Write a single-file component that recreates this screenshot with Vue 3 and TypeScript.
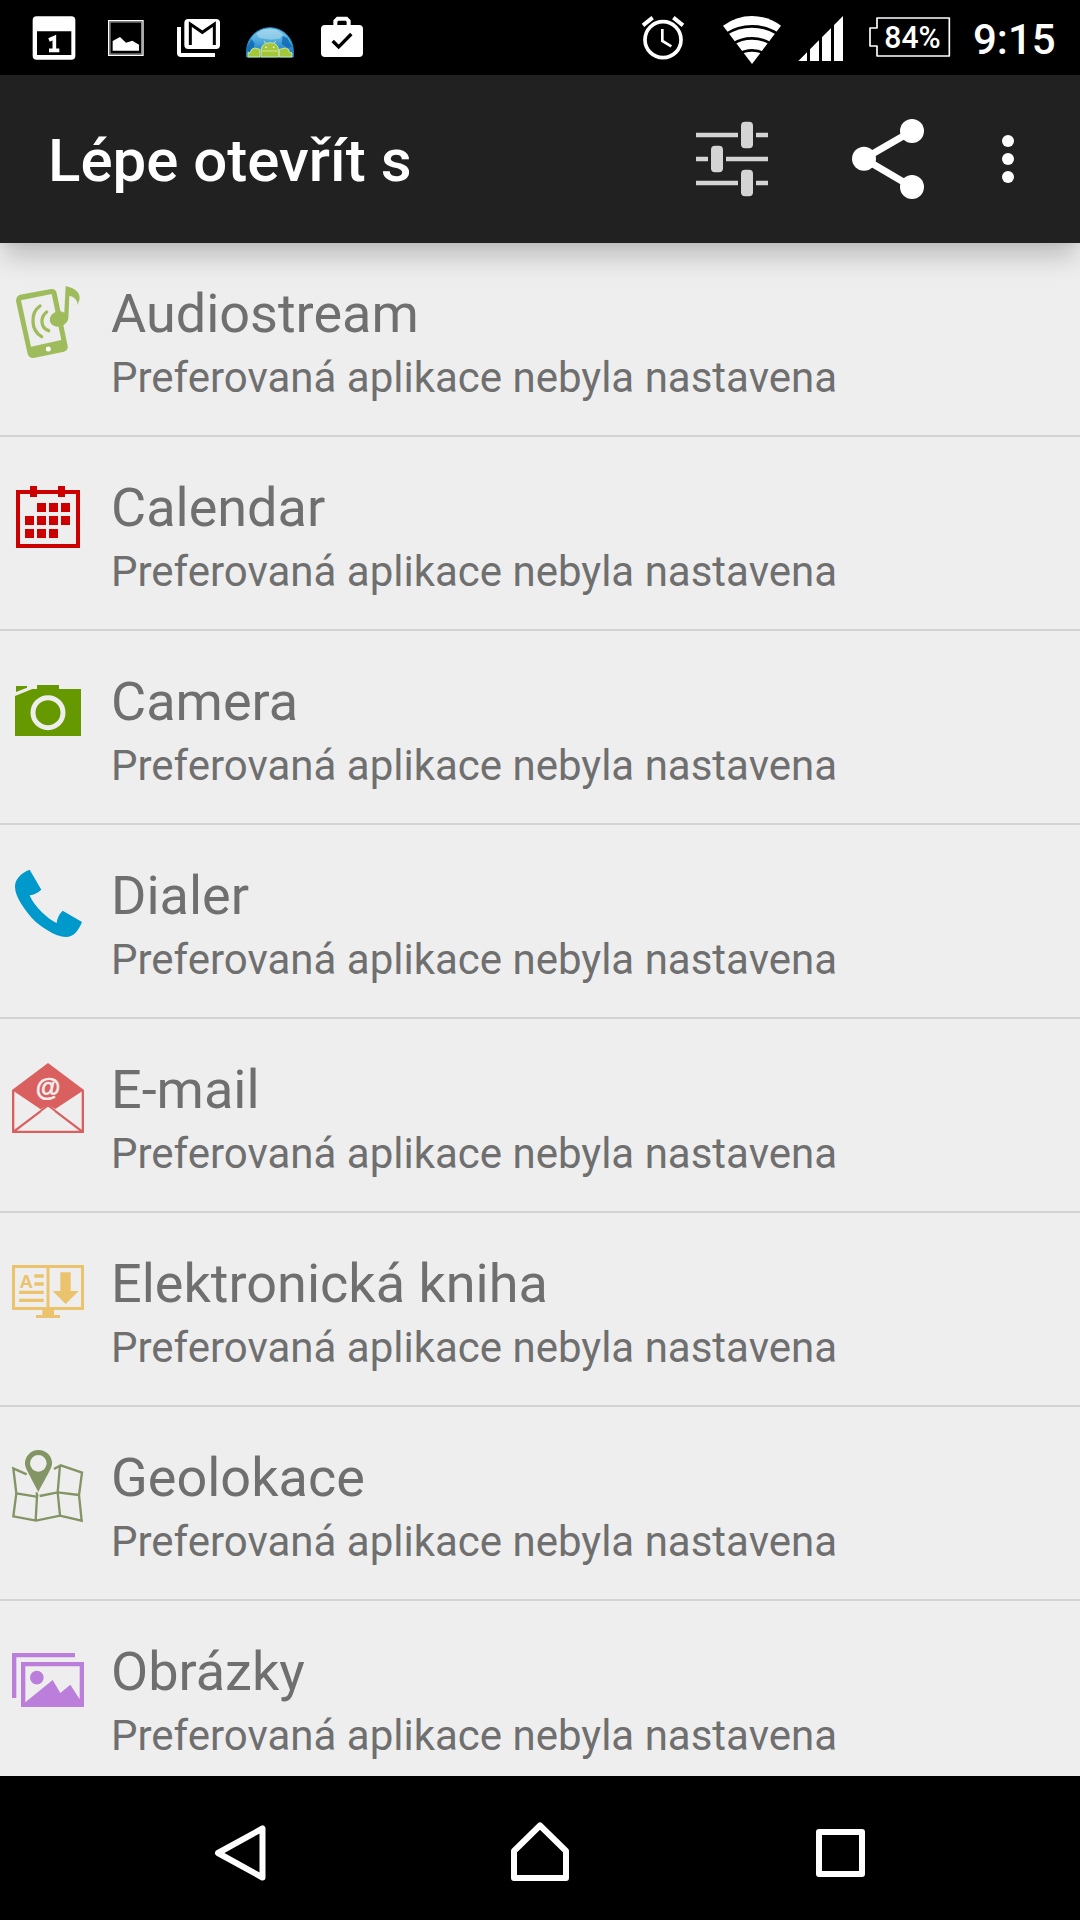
<script setup lang="ts">
interface Entry {
  id: string
  title: string
  view: string
}

const summary = 'Preferovaná aplikace nebyla nastavena'

const entries: Entry[] = [
  { id: 'audio', title: 'Audiostream', view: '0 27 288 288' },
  { id: 'calendar', title: 'Calendar', view: '0 9 288 288' },
  { id: 'camera', title: 'Camera', view: '0 21 288 288' },
  { id: 'dialer', title: 'Dialer', view: '0 3 288 288' },
  { id: 'email', title: 'E-mail', view: '0 15 288 288' },
  { id: 'ebook', title: 'Elektronická kniha', view: '0 -3 288 288' },
  { id: 'geo', title: 'Geolokace', view: '0 39 288 288' },
  { id: 'images', title: 'Obrázky', view: '0 621 288 288' },
]

const calendarCells: [number, number][] = [
  [111, 99], [147, 99], [183, 99],
  [75, 138], [111, 138], [147, 138], [183, 138],
  [75, 177], [111, 177], [147, 177],
]
</script>

<template>
  <div class="screen">
    <header class="status">
      <div class="notifications">
        <svg class="note" viewBox="90 0 144 225">
          <path fill="#fff" fill-rule="evenodd" d="M110 49H214Q226 49 226 61V167Q226 179 214 179H110Q98 179 98 167V61Q98 49 110 49ZM111 94V165H214V94Z" />
          <path fill="none" stroke="#fff" stroke-width="11" d="M147 120L163 113V152M147 151H178" />
        </svg>
        <svg class="note" viewBox="306 0 144 225">
          <rect x="326" y="62" width="103" height="104" fill="none" stroke="#fff" stroke-width="4" />
          <rect x="330" y="66" width="95" height="96" fill="none" stroke="#aaa" stroke-width="3" />
          <path fill="#fff" d="M338 152V123L360 111L378 128L397 122L417 134V152Z" />
        </svg>
        <svg class="note" viewBox="522 0 144 225">
          <path fill="none" stroke="#fff" stroke-width="12" d="M537 81V159Q537 165 543 165H645" />
          <rect x="553" y="57" width="107" height="90" rx="12" fill="#fff" />
          <path fill="none" stroke="#000" stroke-width="9" d="M571 135V72L607 97L643 72V135" />
        </svg>
        <svg class="note" viewBox="738 0 144 225">
          <defs>
            <linearGradient id="sky" x1="0" y1="0" x2="0" y2="1">
              <stop offset="0" stop-color="#8ccbe8" />
              <stop offset="0.45" stop-color="#4ba9da" />
              <stop offset="1" stop-color="#0b6cb8" />
            </linearGradient>
          </defs>
          <path fill="url(#sky)" stroke="#1b8fc8" stroke-width="3" d="M740 171V153A70 70 0 0 1 880 153V171Z" />
          <path fill="#0a61b0" opacity=".75" d="M742 140L754 117L764 130L759 153H742ZM848 108L862 114L876 140L864 145L845 132Z" />
          <path fill="#b5def2" opacity=".55" d="M768 100L790 88L826 88L850 104L838 116L812 119L778 114Z" />
          <path fill="#a4c639" stroke="#d9edb0" stroke-width="2.5" d="M744 171V158H751Q752 145 764 144L780 148V171ZM876 171V158H869Q868 145 856 144L838 148V171Z" />
          <path fill="#a4c639" stroke="#d9edb0" stroke-width="2.5" d="M797 130L792 123M822 130L827 123M783 151Q785 128 810 128Q834 128 836 151V171H783Z" />
          <path stroke="#e8f4c8" stroke-width="2" d="M784 153H835" />
          <circle cx="798" cy="142" r="2.5" fill="#fff" />
          <circle cx="821" cy="142" r="2.5" fill="#fff" />
        </svg>
        <svg class="note" viewBox="954 0 144 225">
          <rect x="963" y="75" width="126" height="96" rx="12" fill="#fff" />
          <path fill="none" stroke="#fff" stroke-width="12" d="M1006 78V63L1013 56H1039L1046 63V78" />
          <path fill="none" stroke="#000" stroke-width="10" d="M998 123L1016 141L1054 102" />
        </svg>
      </div>
      <div class="indicators">
        <svg class="alarm" viewBox="60 0 138 225">
          <circle cx="129" cy="119" r="54" fill="none" stroke="#fff" stroke-width="11" />
          <path fill="none" stroke="#fff" stroke-width="12" d="M69 76L98 53M160 53L189 76" />
          <path fill="none" stroke="#fff" stroke-width="8" d="M127 87V123L154 139" />
        </svg>
        <svg class="wifi" viewBox="306 0 180 225">
          <path fill="#fff" d="M309 77Q349 48 396 48T483 77L396 192Z" />
          <path fill="none" stroke="#000" stroke-width="8" d="M318 102Q353 79 396 79T474 102M338 132Q364 115 396 115T454 132M358 161Q375 151 396 151T434 161" />
        </svg>
        <svg class="signal" viewBox="534 0 138 225">
          <path fill="#fff" d="M535 183L669 48V183Z" />
          <path stroke="#000" stroke-width="9" d="M565.500 40V190M601.500 40V190M637.500 40V190" />
        </svg>
        <svg class="battery" viewBox="747 0 246 225">
          <path fill="none" stroke="#fff" stroke-width="5" stroke-linejoin="round" d="M771 54H988V168H771V138H750V84H771Z" />
          <text class="percent" x="793" y="144" textLength="169" lengthAdjust="spacingAndGlyphs">84%</text>
        </svg>
        <span class="clock">9:15</span>
      </div>
    </header>

    <div class="appbar">
      <h1>Lépe otevřít s</h1>
      <svg class="tune" viewBox="108 -15 216 504">
        <g fill="#d4d4d4">
          <path d="M108 158H234V172H108ZM288 158H324V172H288ZM108 230H144V244H108ZM198 230H324V244H198ZM108 302H234V316H108ZM288 302H324V316H288Z" />
          <rect x="243" y="125" width="36" height="80" rx="12" />
          <rect x="153" y="197" width="36" height="80" rx="12" />
          <rect x="243" y="269" width="36" height="80" rx="12" />
        </g>
      </svg>
      <svg class="share" viewBox="567 -15 234 504">
        <path fill="none" stroke="#fff" stroke-width="21" d="M756 153L612 236L756 321" />
        <g fill="#fff">
          <circle cx="756" cy="153" r="36" />
          <circle cx="612" cy="236" r="36" />
          <circle cx="756" cy="321" r="36" />
        </g>
      </svg>
      <svg class="more" viewBox="1020 -15 48 504">
        <g fill="#fff">
          <circle cx="1044" cy="183" r="18" />
          <circle cx="1044" cy="237" r="18" />
          <circle cx="1044" cy="291" r="18" />
        </g>
      </svg>
    </div>

    <ul class="list">
      <li v-for="entry in entries" :key="entry.id" class="row">
        <svg class="icon" :viewBox="entry.view">
          <g v-if="entry.id === 'audio'" fill="#9fbc5d">
            <path fill-rule="evenodd" d="M60 74L153 57Q167 56 170 69L203 228Q205 241 192 245L101 264Q87 265 83 252L48 94Q48 78 60 74ZM63 91L93 230L184 210L155 72Z" />
            <ellipse cx="176" cy="147" rx="27" ry="23" transform="rotate(-14 176 147)" />
            <path d="M192 145L197 48Q240 58 239 86L233 105Q232 82 208 77L205 145Q203 158 190 163Z" />
            <path fill="none" stroke="#9fbc5d" stroke-width="10" stroke-linecap="round" d="M120 108C91 128 91 180 125 200M140 126C119 142 122 174 146 182" />
            <circle cx="145" cy="237" r="7.500" fill="#fff" />
          </g>
          <g v-else-if="entry.id === 'calendar'" fill="#c00">
            <rect x="54" y="66" width="180" height="162" fill="none" stroke="#c00" stroke-width="12" />
            <rect x="90" y="48" width="21" height="33" />
            <rect x="174" y="48" width="21" height="33" />
            <rect v-for="cell in calendarCells" :key="cell.join()" :x="cell[0]" :y="cell[1]" width="27" height="27" />
          </g>
          <g v-else-if="entry.id === 'camera'" fill="#690">
            <path d="M45 108L97 87H111V75H177V87H243V228H45ZM48 78H81V83L48 96Z" />
            <circle cx="144" cy="158" r="45" fill="none" stroke="#eee" stroke-width="15" />
          </g>
          <path v-else-if="entry.id === 'dialer'" fill="#09c" d="M89 29L124 89Q109 103 89 106C99 133 139 175 170 189Q172 168 188 152L246 186C235 212 222 231 198 231C164 231 122 198 105 184C77 154 45 112 45 80C45 57 63 39 89 29Z" />
          <g v-else-if="entry.id === 'email'">
            <path fill="#da6060" d="M144 39L252 120L166 177L144 166L122 178L36 120Z" />
            <path fill="none" stroke="#da6060" stroke-width="7" d="M39.500 120V245.500H248.500V120M42 244L144 167L246 244" />
            <path fill="#eee" d="M144 170L166 187L122 187Z" />
            <text class="at" x="144" y="138" text-anchor="middle">@</text>
          </g>
          <g v-else-if="entry.id === 'ebook'" fill="#ebc36c">
            <path fill="none" stroke="#ebc36c" stroke-width="9" d="M40.500 49.500H247.500V175.500H40.500ZM144 49V176" />
            <path d="M127 179H162V195H180V204H108V195H127ZM181 67H212V123H236L197 162L158 123H181ZM57 122H131V132H57ZM57 146H131V156H57ZM103 73H131V83H103ZM103 97H131V107H103Z" />
            <text class="letter" x="78.500" y="114" text-anchor="middle">A</text>
          </g>
          <g v-else-if="entry.id === 'geo'" fill="none" stroke="#839465" stroke-width="7">
            <path d="M80 133L40 115L49 190L40 259L108 272L180 257L245 272L237 195L246 128L182 106L162 117M180 106L173 187L180 257M111 200L107 270M49 190L109 200M119 198L173 187L237 195M109 187L113 200" />
            <path fill="#839465" stroke="none" fill-rule="evenodd" d="M115 60A40 40 0 0 1 156 100C156 115 145 129 115 186C86 129 75 115 75 100A40 40 0 0 1 115 60ZM115 75A25 25 0 1 0 115 125A25 25 0 1 0 115 75Z" />
          </g>
          <g v-else fill="#bb7fdb">
            <path d="M36 669H225V682H49V804H36Z" />
            <path fill-rule="evenodd" d="M63 696H252V831H63ZM76 709V817L158 750L181 789L211 764L239 808V709Z" />
            <circle cx="110.500" cy="743" r="20.500" />
          </g>
        </svg>
        <div class="texts">
          <div class="title">{{ entry.title }}</div>
          <div class="summary">{{ summary }}</div>
        </div>
      </li>
    </ul>

    <nav class="nav">
      <svg viewBox="0 0 70 144"><path d="M57.500 52.500V101.500L13 77Z" /></svg>
      <svg viewBox="0 0 70 144"><path d="M9 102V75L35 49.500L61 75V102Z" /></svg>
      <svg viewBox="0 0 70 144"><path d="M14 56H57V98H14Z" /></svg>
    </nav>
  </div>
</template>

<style>
body {
  background: #000;
}
</style>

<style scoped>
.screen {
  width: 1080px;
  height: 1920px;
  display: flex;
  flex-direction: column;
  overflow: hidden;
  background: #eee;
  font-family: Roboto, "Noto Sans", sans-serif;
}
svg {
  display: block;
  flex: none;
}
.status {
  flex: none;
  height: 75px;
  display: flex;
  justify-content: space-between;
  background: #000;
}
.notifications {
  display: flex;
  gap: 24px;
  padding-left: 30px;
}
.note {
  width: 48px;
  height: 75px;
}
.indicators {
  display: flex;
  width: 440px;
}
.alarm {
  width: 46px;
  height: 75px;
}
.wifi {
  width: 60px;
  height: 75px;
  margin-left: 36px;
}
.signal {
  width: 46px;
  height: 75px;
  margin-left: 16px;
}
.battery {
  width: 82px;
  height: 75px;
  margin-left: 25px;
}
.percent {
  font-size: 94px;
  font-weight: 500;
  fill: #fff;
}
.clock {
  margin-left: 22px;
  color: #fff;
  font-size: 42px;
  font-weight: 500;
  line-height: 80px;
}
.appbar {
  position: relative;
  z-index: 1;
  flex: none;
  height: 168px;
  display: flex;
  background: #212121;
  box-shadow: 0 18px 24px -4px rgba(0, 0, 0, 0.2), 0 3px 6px rgba(0, 0, 0, 0.04);
}
h1 {
  margin: 0;
  padding-left: 48px;
  width: 648px;
  font-size: 60px;
  font-weight: 500;
  line-height: 172px;
  color: #fff;
}
.tune {
  width: 72px;
  height: 168px;
}
.share {
  width: 78px;
  height: 168px;
  margin-left: 81px;
}
.more {
  width: 16px;
  height: 168px;
  margin-left: 73px;
}
.list {
  flex: 1;
  min-height: 0;
  margin: 0;
  padding: 0;
  list-style: none;
  overflow: hidden;
}
.row {
  height: 192px;
  display: flex;
  border-bottom: 2px solid #d2d2d2;
}
.icon {
  width: 96px;
  height: 96px;
  margin-top: 36px;
}
.texts {
  padding: 39px 0 0 15px;
  color: #6f6f6f;
}
.title {
  font-size: 54px;
  line-height: 64px;
}
.summary {
  font-size: 42px;
  line-height: 64px;
}
.at {
  font-family: "Liberation Sans", sans-serif;
  font-size: 76px;
  font-weight: 700;
  fill: #eee;
  stroke: #eee;
  stroke-width: 1.5;
}
.letter {
  font-family: "Liberation Sans", sans-serif;
  font-size: 56px;
  font-weight: 700;
}
.nav {
  flex: none;
  height: 144px;
  display: flex;
  justify-content: center;
  gap: 230px;
  background: #000;
}
.nav svg {
  width: 70px;
  height: 144px;
}
.nav path {
  fill: none;
  stroke: #fff;
  stroke-width: 6;
  stroke-linejoin: round;
}
</style>
